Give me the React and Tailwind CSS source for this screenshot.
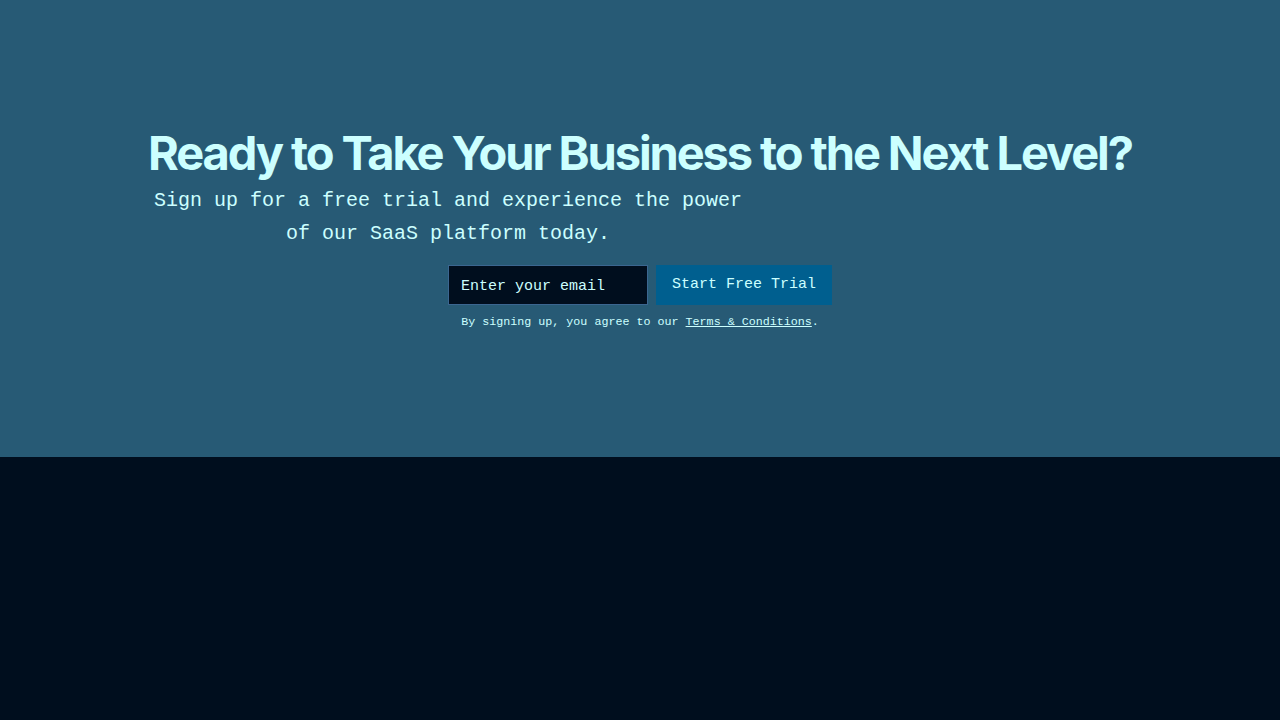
export default function App() {
  return (
    <div className="min-h-[720px] w-full bg-[#000e1e]">
      <section className="h-[457px] w-full bg-[#275a75] flex flex-col items-center justify-center">
        <div className="flex flex-col items-center">
          <h1
            className="text-[47px] leading-[52px] font-bold tracking-[-2.1px] text-[#ccffff] whitespace-nowrap"
            style={{ fontFamily: "Inter, 'Noto Sans', sans-serif" }}
          >
            Ready to Take Your Business to the Next Level?
          </h1>
          <p
            className="self-start w-[600px] mt-[5px] text-center text-[20px] leading-[33px] text-[#ccffff]"
            style={{ fontFamily: "'Liberation Mono', 'DejaVu Sans Mono', monospace" }}
          >
            Sign up for a free trial and experience the power of our SaaS platform today.
          </p>
          <form
            className="mt-[15px] flex gap-2"
            style={{ fontFamily: "'Liberation Mono', 'DejaVu Sans Mono', monospace" }}
            onSubmit={(e) => e.preventDefault()}
          >
            <input
              type="email"
              placeholder="Enter your email"
              className="w-[200px] h-[40px] px-3 pt-[2px] bg-[#000e1e] border border-[#3b6690] text-[15px] text-[#ccffff] placeholder:text-[#ccffff] outline-none"
            />
            <button
              type="submit"
              className="w-[176px] h-[40px] bg-[#005f8f] text-[15px] leading-[40px] text-[#ccffff]"
            >
              Start Free Trial
            </button>
          </form>
          <p
            className="mt-[9px] text-[11.7px] leading-[16px] text-[#ccffff]"
            style={{ fontFamily: "'Liberation Mono', 'DejaVu Sans Mono', monospace" }}
          >
            By signing up, you agree to our{" "}
            <a href="#" className="underline">Terms &amp; Conditions</a>.
          </p>
        </div>
      </section>
    </div>
  );
}
